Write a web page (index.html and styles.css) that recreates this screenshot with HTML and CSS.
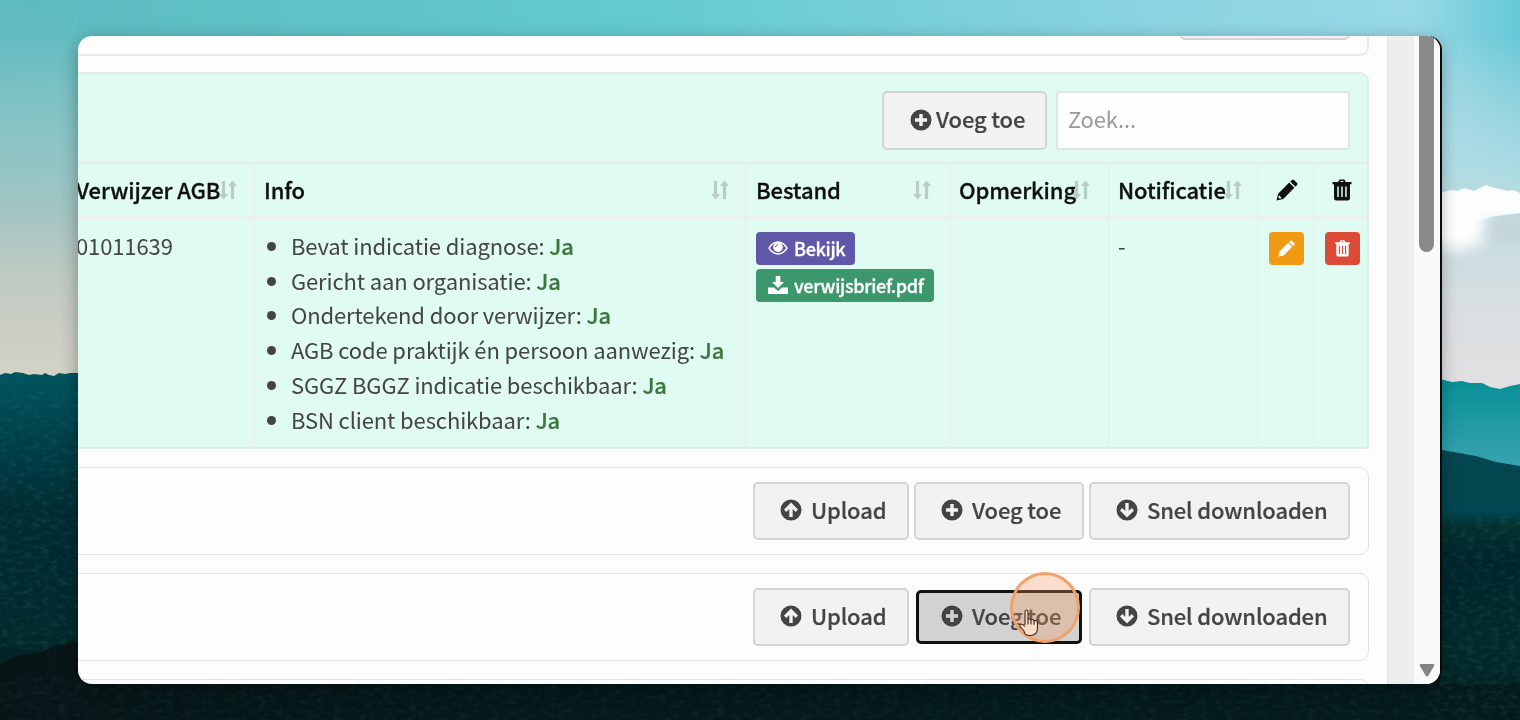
FILE: index.html
```
<!DOCTYPE html>
<html lang="nl">
<head>
  <meta charset="UTF-8">
  <title>Verwijsbrieven</title>
  <link rel="stylesheet" href="styles.css">
</head>
<body>
  <!-- icons -->
  <svg class="sprite">
    <symbol id="plus-circle" viewBox="0 0 22 22">
      <path fill="currentColor" fill-rule="evenodd" d="M11 .5a10.5 10.5 0 1 0 0 21 10.5 10.5 0 0 0 0-21zM9.3 5h3.4v4.3H17v3.4h-4.3V17H9.3v-4.3H5V9.3h4.3z"/>
    </symbol>
    <symbol id="arrow-up-circle" viewBox="0 0 22 22">
      <path fill="currentColor" fill-rule="evenodd" d="M11 .5a10.5 10.5 0 1 0 0 21 10.5 10.5 0 0 0 0-21zM11 3.6l7 7-2.3 2.3-3-3V18H9.3V9.9l-3 3L4 10.6z"/>
    </symbol>
    <symbol id="arrow-down-circle" viewBox="0 0 22 22">
      <path fill="currentColor" fill-rule="evenodd" d="M11 .5a10.5 10.5 0 1 0 0 21 10.5 10.5 0 0 0 0-21zM11 18.4l7-7-2.3-2.3-3 3V4H9.3v8.1l-3-3L4 11.4z"/>
    </symbol>
    <symbol id="sort" viewBox="0 0 20 22">
      <path fill="currentColor" d="M3.2 1h3.600v14.500H10l-5 6-5-6h3.200zM13.200 21h3.600V6.500H20l-5-6-5 6h3.200z"/>
    </symbol>
    <symbol id="pencil" viewBox="0 0 22 22">
      <path fill="currentColor" d="M.5 21.5l1.600-6.800L13.200 3.600l5.200 5.200L7.300 19.900zM14.200 2.600L16 .9q1-.8 2 0l3.100 3.100q.8 1 0 2l-1.700 1.800z"/>
      <path class="pencil-tip" d="M2.900 16.300l2.800 2.800-2 .6-1.400-1.400z"/>
    </symbol>
    <symbol id="trash" viewBox="0 0 20 22">
      <path fill="currentColor" fill-rule="evenodd" d="M6.200 3L7.500.4h5L13.800 3H19.500v2.200H18V19q0 2.500-2.200 2.500H4.200Q2 21.500 2 19V5.200H.5V3zM8.300 3h3.400l-.6-1H8.900zM5.300 7.500v10.500h1.500V7.500zM9.250 7.500v10.500h1.500V7.500zM13.200 7.500v10.500h1.500V7.500z"/>
    </symbol>
    <symbol id="eye" viewBox="0 0 20 14">
      <path fill="none" stroke="currentColor" stroke-width="1.5" d="M1 7.200Q4.500 1 10 1t9 6.200Q15.500 13 10 13T1 7.200z"/>
      <circle cx="10" cy="6.2" r="4.8" fill="currentColor"/>
      <path class="eye-glint" d="M7.600 6.200A2.500 2.500 0 0 1 10 3.600"/>
    </symbol>
    <symbol id="download" viewBox="0 0 20 18">
      <path fill="currentColor" d="M7.700 0h4.600v6H16l-6 6-6-6h3.700zM0 11.500h6l4 3.500 4-3.500h6V17q0 1-1 1H1q-1 0-1-1z"/>
    </symbol>
  </svg>

  <!-- wallpaper -->
  <svg class="wallpaper" viewBox="0 0 1520 720" preserveAspectRatio="none">
    <defs>
      <linearGradient id="sky" x1="0" x2="1" y1="0" y2="0">
        <stop offset="0" stop-color="#5dbabf"/>
        <stop offset=".42" stop-color="#62cbce"/>
        <stop offset=".75" stop-color="#8ad3e0"/>
        <stop offset=".93" stop-color="#98d8e5"/>
        <stop offset="1" stop-color="#66c8d7"/>
      </linearGradient>
      <linearGradient id="haze" x1="0" x2="0" y1="0" y2="1">
        <stop offset="0" stop-color="#b0cbc8" stop-opacity="0"/>
        <stop offset=".3" stop-color="#a0c8c8" stop-opacity=".6"/>
        <stop offset=".5" stop-color="#a5c6c3" stop-opacity=".9"/>
        <stop offset=".7" stop-color="#bfcac2"/>
        <stop offset="1" stop-color="#d5d2c6"/>
      </linearGradient>
      <linearGradient id="hazeRight" x1="0" x2="0" y1="0" y2="1">
        <stop offset="0" stop-color="#d5e2e7" stop-opacity="0"/>
        <stop offset=".35" stop-color="#b9dfe6" stop-opacity=".8"/>
        <stop offset=".5" stop-color="#c3dbe0"/>
        <stop offset=".75" stop-color="#dadfe1"/>
        <stop offset="1" stop-color="#e2e0e1"/>
      </linearGradient>
      <linearGradient id="hill" x1="0" x2="0" y1="0" y2="1">
        <stop offset="0" stop-color="#00565f"/>
        <stop offset=".18" stop-color="#00414a"/>
        <stop offset=".4" stop-color="#002c33"/>
        <stop offset=".75" stop-color="#02292c"/>
        <stop offset="1" stop-color="#071416"/>
      </linearGradient>
      <linearGradient id="farHill" x1="0" x2="0" y1="0" y2="1">
        <stop offset="0" stop-color="#078f97"/>
        <stop offset=".8" stop-color="#36a3af"/>
      </linearGradient>
      <linearGradient id="nearHill" x1="0" x2="0" y1="0" y2="1">
        <stop offset="0" stop-color="#06464f"/>
        <stop offset=".24" stop-color="#014650"/>
        <stop offset=".29" stop-color="#02312f"/>
        <stop offset=".42" stop-color="#00242a"/>
        <stop offset=".75" stop-color="#022a2b"/>
        <stop offset="1" stop-color="#061c1d"/>
      </linearGradient>
      <linearGradient id="ground" x1="0" x2="1" y1="0" y2="0">
        <stop offset="0" stop-color="#081517"/>
        <stop offset=".3" stop-color="#04191a"/>
        <stop offset="1" stop-color="#041b1c"/>
      </linearGradient>
      <filter id="soft" x="-1" y="-1" width="3" height="3"><feGaussianBlur stdDeviation="7"/></filter>
      <filter id="foliage" x="0" y="0" width="1" height="1">
        <feTurbulence type="fractalNoise" baseFrequency=".12 .22" numOctaves="3" seed="4"/>
        <feColorMatrix values="0 0 0 0 .1  0 0 0 0 .42  0 0 0 0 .42  1.6 0 0 0 -.72"/>
      </filter>
    </defs>
    <rect width="1520" height="720" fill="url(#sky)"/>
    <rect y="36" width="760" height="344" fill="url(#haze)"/>
    <rect width="78" height="380" fill="url(#haze)" opacity=".3"/>
    <rect x="760" y="36" width="760" height="364" fill="url(#hazeRight)"/>
    <ellipse cx="1455" cy="226" rx="34" ry="24" fill="#fff" filter="url(#soft)"/>
    <path fill="#fdfefe" d="M1430 194l14-2 6-2 8 1 6-3 10 3 6-3 6-3 8 3 6 1 8 2 5-1 7 3v20l-30 4-24 10-36 6z"/>
    <ellipse cx="1508" cy="230" rx="26" ry="9" fill="#c4d3d8" filter="url(#soft)"/>
    <path fill="url(#farHill)" d="M1400 379h40l12 3 10-1 8 2 12 0 8 4 10 2 10-3 10-2v100h-120z"/>
    <path fill="url(#nearHill)" d="M1400 446l42 4 34 6 20 6 24 4v254h-120z"/>
    <path fill="url(#hill)" d="M0 375l5-2 6 1 4-2 8 1 6 2 5-1 8 1 3-2 4 2 5 1 5-3 6 1 5-1 8 0v347H0z"/>
    <path fill="url(#ground)" d="M0 664l20-9 20-3 20-8 20-4v36h1360v8h80v36H0z"/>
    <rect y="390" width="90" height="260" filter="url(#foliage)" opacity=".2"/>
    <rect x="1430" y="516" width="90" height="204" filter="url(#foliage)" opacity=".2"/>
    <rect x="0" y="676" width="1430" height="44" filter="url(#foliage)" opacity=".13"/>
  </svg>

  <div class="window">
    <div class="main">
      <div class="panel panel-cut-top">
        <button class="btn btn-cut"></button>
      </div>

      <div class="panel panel-green">
        <div class="toolbar">
          <button class="btn btn-tight"><svg class="icon"><use href="#plus-circle"/></svg><span>Voeg toe</span></button>
          <input class="search" type="text" placeholder="Zoek...">
        </div>
        <table class="grid">
          <colgroup>
            <col class="c-agb"><col class="c-info"><col class="c-file"><col class="c-note"><col class="c-notif"><col class="c-edit"><col class="c-del">
          </colgroup>
          <thead>
            <tr>
              <th><div class="head"><span>Verwijzer AGB</span><svg class="sort"><use href="#sort"/></svg></div></th>
              <th><div class="head"><span>Info</span><svg class="sort"><use href="#sort"/></svg></div></th>
              <th><div class="head head-file"><span>Bestand</span><svg class="sort"><use href="#sort"/></svg></div></th>
              <th class="narrow"><div class="head head-note"><span>Opmerking</span><svg class="sort"><use href="#sort"/></svg></div></th>
              <th class="narrow"><div class="head"><span>Notificatie</span><svg class="sort"><use href="#sort"/></svg></div></th>
              <th><div class="head head-icon"><svg class="icon"><use href="#pencil"/></svg></div></th>
              <th><div class="head head-icon"><svg class="icon icon-trash"><use href="#trash"/></svg></div></th>
            </tr>
          </thead>
          <tbody>
            <tr>
              <td>01011639</td>
              <td>
                <ul class="checks">
                  <li>Bevat indicatie diagnose: <b>Ja</b></li>
                  <li>Gericht aan organisatie: <b>Ja</b></li>
                  <li>Ondertekend door verwijzer: <b>Ja</b></li>
                  <li>AGB code praktijk én persoon aanwezig: <b>Ja</b></li>
                  <li>SGGZ BGGZ indicatie beschikbaar: <b>Ja</b></li>
                  <li>BSN client beschikbaar: <b>Ja</b></li>
                </ul>
              </td>
              <td>
                <div class="files">
                  <a class="tag tag-purple"><svg class="icon-eye"><use href="#eye"/></svg>Bekijk</a>
                  <a class="tag tag-green"><svg class="icon-download"><use href="#download"/></svg>verwijsbrief.pdf</a>
                </div>
              </td>
              <td class="narrow"></td>
              <td class="narrow">-</td>
              <td><a class="tag tag-square tag-orange"><svg class="icon-small"><use href="#pencil"/></svg></a></td>
              <td><a class="tag tag-square tag-red"><svg class="icon-small"><use href="#trash"/></svg></a></td>
            </tr>
          </tbody>
        </table>
      </div>

      <div class="panel panel-actions">
        <button class="btn btn-upload"><svg class="icon"><use href="#arrow-up-circle"/></svg><span>Upload</span></button>
        <button class="btn btn-add"><svg class="icon"><use href="#plus-circle"/></svg><span>Voeg toe</span></button>
        <button class="btn btn-download"><svg class="icon"><use href="#arrow-down-circle"/></svg><span>Snel downloaden</span></button>
      </div>

      <div class="panel panel-actions">
        <button class="btn btn-upload"><svg class="icon"><use href="#arrow-up-circle"/></svg><span>Upload</span></button>
        <button class="btn btn-add btn-focus"><svg class="icon"><use href="#plus-circle"/></svg><span>Voeg toe</span></button>
        <button class="btn btn-download"><svg class="icon"><use href="#arrow-down-circle"/></svg><span>Snel downloaden</span></button>
      </div>

      <div class="panel panel-actions"></div>
    </div>
    <div class="gutter"></div>
    <div class="scrollbar">
      <div class="thumb"></div>
      <svg class="scroll-down" viewBox="0 0 16 13"><path fill="#858585" d="M2 0h12q2 0 1.200 1.800L9.500 11.500q-1.500 1.800-3 0L.8 1.800Q0 0 2 0z"/></svg>
    </div>
  </div>

  <!-- click marker and mouse pointer -->
  <div class="click"></div>
  <svg class="pointer" viewBox="0 0 22 28">
    <path fill="#fbdcc6" stroke="#3a2a22" stroke-width="1.1" d="M7 16V3q0-2 1.500-2T10 3v8q.2-1.300 1.500-1.200T13 11.500q.2-1.200 1.500-1T16 12.200q.3-1 1.700-.8T19.500 13.500V19q0 7-6.500 7.500T6 22l-4-4.500q-1-1.700.8-2.200T7 17.500M13 11.500v4M16 12.200v3.500M10 11v4.500"/>
  </svg>
</body>
</html>
```
FILE: styles.css
```
* {
  box-sizing: border-box;
}
body {
  margin: 0;
  height: 720px;
  padding: 36px 78px;
  overflow: hidden;
  font-family: "Noto Sans CJK SC", "Noto Sans", sans-serif;
  font-size: 22px;
  letter-spacing: -0.12px;
  color: #444;
}
.sprite {
  display: none;
}
/* Wallpaper sits behind the window */
.wallpaper {
  position: fixed;
  left: 0;
  top: 0;
  width: 100%;
  height: 100%;
  z-index: -1;
}
.window {
  display: flex;
  width: 1362px;
  height: 648px;
  overflow: hidden;
  background-color: #fdfdfd;
  border-radius: 14px;
  box-shadow: 2px 0 0 #0a0a0a, 0 5px 18px rgba(0,0,0,0.35);
}
.main {
  flex: none;
  width: 1309px;
  padding-right: 18px;
}
.gutter {
  width: 27px;
  background-color: #eee;
  border-left: 1px solid #e2e2e2;
}
.scrollbar {
  flex: 1;
  display: flex;
  flex-direction: column;
  justify-content: space-between;
  align-items: center;
  padding-right: 1px;
  background-color: #fafafa;
}
.thumb {
  width: 15px;
  height: 216px;
  background-color: #898989;
  border-radius: 0 0 8px 8px;
}
.scroll-down {
  width: 16px;
  height: 13px;
  margin-bottom: 7px;
}

/* Panels */
.panel {
  margin-left: -20px;
  border: 2px solid #e8e8e8;
  border-radius: 9px;
}
.panel-cut-top {
  display: flex;
  justify-content: flex-end;
  height: 20px;
  padding-right: 17px;
  border-top: 0;
  border-top-right-radius: 0;
}
.panel-green {
  height: 377px;
  margin-top: 16px;
  background-color: #e0fbf2;
  border-color: #e2ebe8;
  border-radius: 9px 9px 0 0;
}
.panel-actions {
  display: flex;
  justify-content: flex-end;
  gap: 5px;
  height: 88px;
  margin-top: 18px;
  padding: 14px 18px;
  border-width: 1.5px;
  border-color: #e2e2e2;
}
.toolbar {
  display: flex;
  justify-content: flex-end;
  gap: 9px;
  height: 88px;
  padding: 17px 17px 0;
}

/* Buttons */
.btn {
  display: flex;
  align-items: center;
  flex: none;
  height: 58px;
  padding: 0 0 2px 25px;
  border: 2px solid #d4d4d4;
  border-radius: 5px;
  background-color: #f2f2f2;
  color: #444;
  font-family: inherit;
  font-size: 22px;
  font-weight: 500;
  letter-spacing: -0.15px;
  line-height: 30px;
  white-space: nowrap;
  -webkit-text-stroke: 0.2px;
}
.btn span {
  margin-top: -3px;
}
.btn .icon {
  margin-right: 9px;
}
.btn-cut {
  width: 170px;
  height: 40px;
  margin-top: -36px;
}
.btn-tight {
  width: 165px;
  height: 59px;
  padding-left: 26px;
}
.btn-tight .icon {
  margin-right: 4px;
}
.btn-upload {
  width: 156px;
}
.btn-add {
  width: 170px;
}
.btn-download {
  width: 261px;
}
.btn-focus {
  width: 166px;
  height: 54px;
  margin: 2px 2px 0;
  padding-left: 22px;
  border: 3px solid #111;
  background-color: #d2d2d2;
}
.icon {
  flex: none;
  width: 22px;
  height: 22px;
}
.search {
  width: 294px;
  height: 59px;
  padding: 0 10px 5px;
  border: 2px solid #dfe5e3;
  border-radius: 3px;
  background-color: #fefefe;
  font-family: inherit;
  font-size: 22px;
  letter-spacing: -0.15px;
}
.search::placeholder {
  color: #999;
}

/* Table */
.grid {
  width: 1307px;
  table-layout: fixed;
  border-collapse: separate;
  border-spacing: 0;
  border-top: 2px solid #e4ece9;
}
.c-agb { width: 192px; }
.c-info { width: 492px; }
.c-file { width: 204px; }
.c-note { width: 159px; }
.c-notif { width: 150px; }
.c-edit { width: 56px; }
.c-del { width: 54px; }
.grid th,
.grid td {
  padding: 0 0 0 9px;
  border-left: 3px solid #e6f4ef;
  text-align: left;
  vertical-align: top;
  line-height: 34.7px;
  white-space: nowrap;
}
.grid th {
  height: 55px;
  border-bottom: 3px solid #edf0ef;
  color: #111;
  font-weight: 500;
  -webkit-text-stroke: 0.3px;
}
.grid td {
  height: 228px;
  padding-top: 9px;
}
.grid th:first-child,
.grid td:first-child {
  padding-left: 16px;
  border-left: 0;
}
.grid .narrow {
  padding-left: 8px;
}
.head {
  display: flex;
  align-items: center;
  height: 52px;
  padding-right: 15px;
}
.head span {
  flex: 1;
  width: 0;
  margin-top: -2px;
}
.head-file,
.head-note {
  padding-right: 17px;
}
.sort {
  flex: none;
  width: 18px;
  height: 20px;
  color: #b9cdc5;
}
.head-icon {
  justify-content: center;
  padding-right: 8px;
}
.icon-trash {
  width: 20px;
}
.checks {
  margin: 0;
  padding-left: 27px;
}
.checks b {
  color: #3c763d;
  font-weight: 500;
  -webkit-text-stroke: 0.2px;
}

/* Small coloured buttons in the rows */
.files {
  display: flex;
  flex-direction: column;
  align-items: flex-start;
  gap: 4px;
}
.tag {
  display: flex;
  align-items: center;
  height: 33px;
  padding: 0 10px 2px 12px;
  border-radius: 4px;
  color: #fff;
  font-size: 18px;
  font-weight: 500;
  letter-spacing: -0.33px;
  line-height: 26px;
  -webkit-text-stroke: 0.3px;
}
.files,
.tag-square {
  margin-top: 4px;
}
.tag-purple { background-color: #5f58a9; }
.tag-green { background-color: #3c986c; }
.tag-orange { background-color: #f09a14; }
.tag-red { background-color: #dc4a38; }
.icon-eye {
  width: 20px;
  height: 14px;
  margin-right: 6px;
}
.eye-glint {
  fill: none;
  stroke: #5f58a9;
  stroke-width: 1;
}
.icon-download {
  width: 20px;
  height: 18px;
  margin-right: 6px;
}
.tag-square {
  justify-content: center;
  width: 35px;
  padding: 0;
}
.icon-small {
  width: 17px;
  height: 17px;
}
.pencil-tip {
  fill: #e0fbf2;
}
.tag .pencil-tip {
  fill: #f09a14;
}

/* Click highlight */
.click {
  position: absolute;
  left: 1010px;
  top: 572px;
  width: 70px;
  height: 71px;
  border: 3px solid #f0a26a;
  border-radius: 50%;
  background-color: rgba(245,150,85,0.3);
}
.pointer {
  position: absolute;
  left: 1018px;
  top: 609px;
  width: 22px;
  height: 28px;
}
```
